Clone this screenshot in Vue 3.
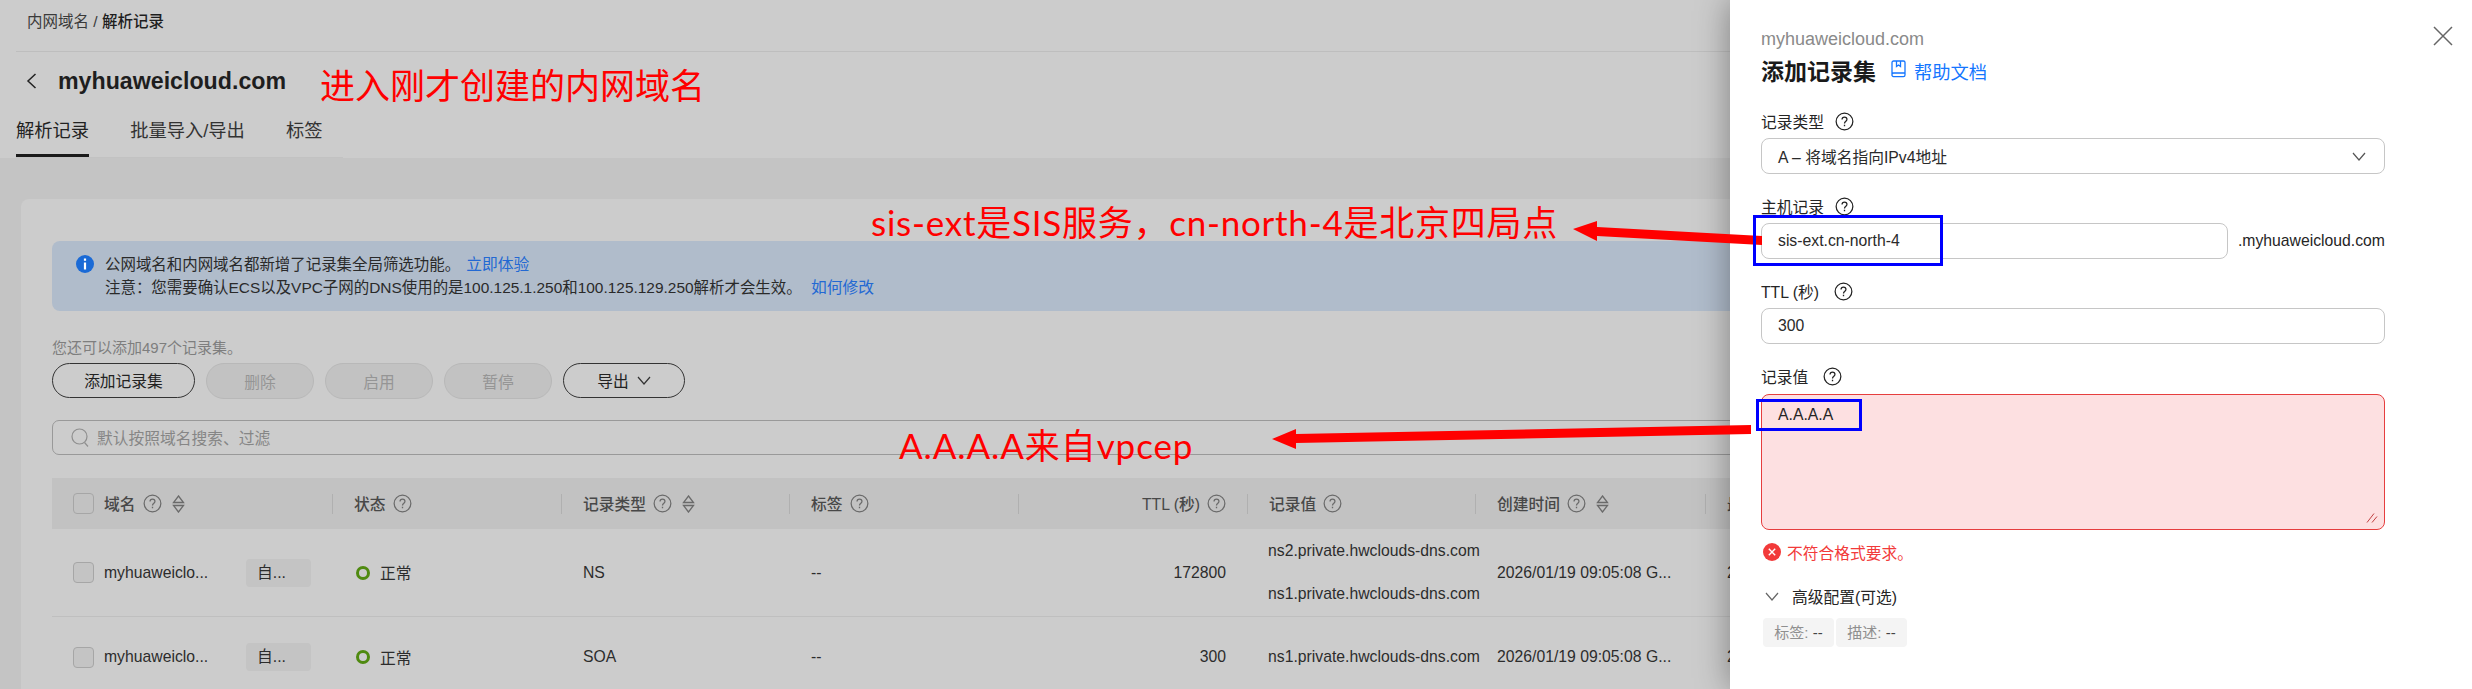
<script setup>
const columns = [
  { label: '域名', help: true, sort: true, check: true },
  { label: '状态', help: true },
  { label: '记录类型', help: true, sort: true },
  { label: '标签', help: true },
  { label: 'TTL (秒)', help: true, right: true },
  { label: '记录值', help: true },
  { label: '创建时间', help: true, sort: true },
  { label: '最近修改时间', help: true }
]
const rows = [
  { type: 'NS', ttl: '172800', values: ['ns2.private.hwclouds-dns.com', 'ns1.private.hwclouds-dns.com'], tall: true },
  { type: 'SOA', ttl: '300', values: ['ns1.private.hwclouds-dns.com'], tall: false }
]
const time = '2026/01/19 09:05:08 G...'
</script>

<template>
  <div class="page">
    <svg class="defs" width="0" height="0" aria-hidden="true">
      <symbol id="help" viewBox="0 0 20 20">
        <circle cx="10" cy="10" r="8.8" fill="none" stroke="currentColor" stroke-width="1.3" />
        <path d="M7.4 7.8c0-1.5 1.1-2.5 2.6-2.5s2.6 1 2.6 2.4c0 1.1-.6 1.7-1.4 2.3-.8.6-1.2 1-1.2 2" fill="none" stroke="currentColor" stroke-width="1.3" />
        <path d="M10 13.4v1.6" fill="none" stroke="currentColor" stroke-width="1.4" />
      </symbol>
      <symbol id="sort" viewBox="0 0 13 18">
        <path d="M6.5 1 11.5 7.5H1.5Z M6.5 17 1.5 10.5H11.5Z" fill="none" stroke="currentColor" stroke-width="1.3" />
      </symbol>
      <symbol id="chev" viewBox="0 0 14 9">
        <path d="M1 1 7 8 13 1" fill="none" stroke="currentColor" stroke-width="1.2" />
      </symbol>
    </svg>

    <header class="head">
      <div class="crumb"><span>内网域名 / </span><span class="crumb-now">解析记录</span></div>
      <div class="title-row">
        <svg class="back" width="11" height="16" viewBox="0 0 11 16"><path d="M9.5 1 2 8l7.5 7" fill="none" stroke="#222" stroke-width="1.5" /></svg>
        <h1 class="title">myhuaweicloud.com</h1>
      </div>
      <div class="tabs">
        <span class="tab tab-on">解析记录</span>
        <span class="tab">批量导入/导出</span>
        <span class="tab">标签</span>
      </div>
    </header>

    <main class="content">
      <section class="card">
        <div class="alert">
          <svg class="info" width="18" height="18" viewBox="0 0 18 18">
            <circle cx="9" cy="9" r="9" fill="#1a6ad6" />
            <path d="M9 3.6v2.2M9 7.4v7" stroke="#fff" stroke-width="2.2" fill="none" />
          </svg>
          <div class="alert-text">
            <div>公网域名和内网域名都新增了记录集全局筛选功能。 <span class="link">立即体验</span></div>
            <div>注意：您需要确认ECS以及VPC子网的DNS使用的是100.125.1.250和100.125.129.250解析才会生效。 <span class="link link-gap">如何修改</span></div>
          </div>
        </div>

        <div class="quota">您还可以添加497个记录集。</div>
        <div class="btns">
          <button class="btn w-add">添加记录集</button>
          <button class="btn off w-off">删除</button>
          <button class="btn off w-off">启用</button>
          <button class="btn off w-off">暂停</button>
          <button class="btn w-exp">导出<svg class="exp-chev" width="14" height="9"><use href="#chev" /></svg></button>
        </div>

        <div class="search">
          <svg width="19" height="20" viewBox="0 0 19 20"><circle cx="8.5" cy="8.5" r="7.5" fill="none" stroke="#8f8f8f" stroke-width="1.2" /><path d="M13.5 14.5 17 18.5" stroke="#8f8f8f" stroke-width="1.2" /></svg>
          <span>默认按照域名搜索、过滤</span>
        </div>

        <div class="table">
          <div class="grid thead">
            <div v-for="c in columns" :key="c.label" class="th" :class="{ right: c.right, first: c.check }">
              <span v-if="c.check" class="check"></span>
              <span class="th-label">{{ c.label }}</span>
              <svg v-if="c.help" class="help" width="19" height="19"><use href="#help" /></svg>
              <svg v-if="c.sort" class="sort" width="13" height="18"><use href="#sort" /></svg>
            </div>
          </div>
          <div v-for="r in rows" :key="r.type" class="grid row" :class="{ tall: r.tall }">
            <div class="td first">
              <span class="check fill"></span>
              <span>myhuaweiclo...</span>
              <span class="chip">自...</span>
            </div>
            <div class="td"><span class="ring"></span><span>正常</span></div>
            <div class="td">{{ r.type }}</div>
            <div class="td">--</div>
            <div class="td right">{{ r.ttl }}</div>
            <div class="td values"><div v-for="v in r.values" :key="v">{{ v }}</div></div>
            <div class="td">{{ time }}</div>
            <div class="td">{{ time }}</div>
          </div>
        </div>
      </section>
    </main>

    <aside class="drawer">
      <div class="d-sub">myhuaweicloud.com</div>
      <div class="d-title">
        <h2>添加记录集</h2>
        <svg class="book" width="15" height="18" viewBox="0 0 15 18"><path d="M1 14.5V2.6A1.6 1.6 0 0 1 2.6 1h9.8A1.6 1.6 0 0 1 14 2.6V13H2.6A1.6 1.6 0 0 0 1 14.5 1.6 1.6 0 0 0 2.6 16.6h9.8A1.6 1.6 0 0 0 14 15v-2M5.5 1v5.5L7.5 5l2 1.5V1" fill="none" stroke="#1476ff" stroke-width="1.3" /></svg>
        <span class="d-link">帮助文档</span>
      </div>

      <div class="f-label l1"><span>记录类型</span><svg class="help dark" width="19" height="19"><use href="#help" /></svg></div>
      <div class="ctl select"><span>A – 将域名指向IPv4地址</span><svg width="14" height="9" class="sel-chev"><use href="#chev" /></svg></div>

      <div class="f-label"><span>主机记录</span><svg class="help dark" width="19" height="19"><use href="#help" /></svg></div>
      <div class="host">
        <div class="ctl host-in">sis-ext.cn-north-4</div>
        <span>.myhuaweicloud.com</span>
      </div>

      <div class="f-label wide"><span>TTL (秒)</span><svg class="help dark" width="19" height="19"><use href="#help" /></svg></div>
      <div class="ctl">300</div>

      <div class="f-label wide"><span>记录值</span><svg class="help dark" width="19" height="19"><use href="#help" /></svg></div>
      <div class="area">
        <span>A.A.A.A</span>
        <svg class="grip" width="12" height="10" viewBox="0 0 12 10"><path d="M1 9.5 8 .5M6 9.5 11 3.5" stroke="#c04040" stroke-width="1" fill="none" /></svg>
      </div>

      <div class="err">
        <svg width="18" height="18" viewBox="0 0 18 18"><circle cx="9" cy="9" r="9" fill="#f23a3a" /><path d="M5.8 5.8l6.4 6.4M12.2 5.8l-6.4 6.4" stroke="#fff" stroke-width="1.4" /></svg>
        <span>不符合格式要求。</span>
      </div>

      <div class="adv">
        <svg width="14" height="9" class="adv-chev"><use href="#chev" /></svg>
        <span>高级配置(可选)</span>
      </div>
      <div class="pills">
        <span class="pill"><i>标签:</i> --</span>
        <span class="pill"><i>描述:</i> --</span>
      </div>

      <svg class="close" width="20" height="20" viewBox="0 0 20 20"><path d="M1 1 19 19M19 1 1 19" stroke="#666" stroke-width="1.5" /></svg>
    </aside>

    <svg class="arrows" width="2472" height="689" viewBox="0 0 2472 689">
      <polygon points="1573,229 1597,221 1597,227 1762,236 1762,245 1597,236 1597,241" fill="#ff0000" />
      <polygon points="1272,439 1296,429 1296,434 1751,425 1751,434 1296,443 1296,449" fill="#ff0000" />
    </svg>
    <div class="note n1">进入刚才创建的内网域名</div>
    <div class="note n2">sis-ext是SIS服务，cn-north-4是北京四局点</div>
    <div class="note n3">A.A.A.A来自vpcep</div>
    <div class="mark m1"></div>
    <div class="mark m2"></div>
  </div>
</template>

<style>
html, body { margin: 0; background: #c4c4c4; }
</style>

<style scoped>
.page {
  position: relative;
  width: 2472px;
  height: 689px;
  overflow: hidden;
  background: #c4c4c4;
  color: #2a2a2a;
  font-family: "Liberation Sans", "Noto Sans CJK SC", sans-serif;
  font-size: 15.75px;
}
.defs { position: absolute; }
.head { height: 158px; background: #cccccc; }
.crumb {
  height: 51px;
  margin-left: 16px;
  padding-left: 11px;
  line-height: 44px;
  border-bottom: 1px solid #bebebe;
  font-size: 15.5px;
  color: #3a3a3a;
}
.crumb-now { color: #1e1e1e; font-weight: 500; }
.title-row { height: 58px; display: flex; align-items: center; padding-left: 26px; gap: 21px; }
.title { margin: 0; font-size: 23.2px; font-weight: 700; color: #1e1e1e; }
.tabs {
  width: 327px;
  height: 47px;
  margin-left: 16px;
  display: flex;
  gap: 41px;
  border-bottom: 1px solid #c2c2c2;
  box-sizing: content-box;
}
.tab { font-size: 18.3px; line-height: 42px; height: 45px; color: #333; }
.tab-on { border-bottom: 3px solid #1a1a1a; height: 44px; color: #222; }

.content { padding: 41px 0 0 21px; }
.card {
  box-sizing: border-box;
  width: 2451px;
  height: 520px;
  padding: 42px 31px 0;
  background: #cccccc;
  border-radius: 8px;
}
.alert {
  height: 70px;
  display: flex;
  gap: 11px;
  padding: 14px 24px 0;
  box-sizing: border-box;
  background: #b0bccb;
  border-radius: 8px;
}
.info { margin-top: 0; flex: none; }
.alert-text { font-size: 15.45px; line-height: 23px; margin-top: -2px; color: #2a2a2a; }
.link { color: #2369d3; font-size: 15.75px; margin-left: 2px; }
.link-gap { margin-left: 5px; }
.quota { margin-top: 27px; line-height: 20px; color: #7e7e7e; font-size: 15px; }
.btns { margin-top: 5px; display: flex; gap: 11px; }
.btn {
  box-sizing: border-box;
  height: 35px;
  padding: 0;
  display: flex;
  align-items: center;
  justify-content: center;
  background: transparent;
  border: 1px solid #333;
  border-radius: 18px;
  font: inherit;
  color: #222;
}
.w-add { width: 143px; }
.w-off { width: 108px; height: 36px; }
.w-exp { width: 122px; }
.off { background: #c2c2c2; border-color: #b8b8b8; color: #959595; }
.exp-chev { margin-left: 8px; color: #333; }
.search {
  box-sizing: border-box;
  margin-top: 21px;
  height: 35px;
  display: flex;
  align-items: center;
  gap: 7px;
  padding-left: 18px;
  border: 1px solid #999;
  border-radius: 7px;
  color: #868686;
}
.table { margin-top: 23px; }
.grid { display: grid; grid-template-columns: 280px 229px 228px 229px 229px 228px 230px 400px; }
.thead { height: 51px; background: #c2c2c2; align-items: center; }
.th {
  position: relative;
  display: flex;
  align-items: center;
  height: 20px;
  padding-left: 21px;
  color: #484848;
  font-weight: 500;
  border-left: 1px solid #b0b0b0;
  box-sizing: border-box;
}
.th.first { border-left: 0; padding-left: 21px; }
.th.right { justify-content: flex-end; padding-right: 21px; }
.th-label { margin-right: 7px; }
.help { color: #6a6a6a; flex: none; }
.help.dark { color: #222; }
.sort { margin-left: 10px; color: #6a6a6a; flex: none; }
.check {
  box-sizing: border-box;
  width: 21px;
  height: 21px;
  margin-right: 10px;
  border: 1px solid #a6a6a6;
  border-radius: 4px;
  flex: none;
}
.check.fill { background: #c4c4c4; }
.row { height: 80px; border-bottom: 1px solid #bfbfbf; box-sizing: content-box; }
.row.tall { height: 87px; }
.td { display: flex; align-items: center; padding-left: 22px; min-width: 0; white-space: nowrap; color: #2c2c2c; }
.td.first { padding: 0 21px; }
.td.right { justify-content: flex-end; padding-right: 21px; }
.td.values { flex-direction: column; align-items: flex-start; justify-content: center; gap: 25px; padding-left: 21px; }
.chip {
  margin-left: auto;
  width: 65px;
  height: 28px;
  line-height: 28px;
  padding-left: 11px;
  box-sizing: border-box;
  background: #c4c4c4;
  border-radius: 4px;
}
.ring {
  box-sizing: border-box;
  width: 14px;
  height: 14px;
  margin: 0 10px 0 2px;
  border: 3px solid #4f8a10;
  border-radius: 50%;
}

.drawer {
  position: absolute;
  top: 0;
  right: 0;
  bottom: 0;
  width: 742px;
  box-sizing: border-box;
  padding: 29px 87px 0 31px;
  background: #fff;
  box-shadow: 0 0 32px rgba(0, 0, 0, 0.38);
  color: #252525;
}
.d-sub { line-height: 20px; color: #8a8a8a; font-size: 18px; }
.d-title { margin-top: 6px; height: 30px; display: flex; align-items: center; }
.d-title h2 { margin: 0; font-size: 23px; font-weight: 700; color: #1a1a1a; }
.book { margin-left: 15px; position: relative; top: -1px; }
.d-link { margin-left: 8px; font-size: 18.3px; color: #1476ff; position: relative; top: 1px; }
.f-label { margin-top: 22px; height: 20px; display: flex; align-items: center; gap: 11px; }
.f-label.wide { gap: 15px; }
.l1 { margin-top: 26px; }
.ctl {
  box-sizing: border-box;
  height: 36px;
  margin-top: 7px;
  padding-left: 16px;
  display: flex;
  align-items: center;
  border: 1px solid #c6c6c6;
  border-radius: 8px;
  color: #2a2a2a;
}
.select { justify-content: space-between; padding-right: 18px; }
.sel-chev { color: #555; }
.host { display: flex; align-items: flex-end; justify-content: space-between; }
.host-in { width: 467px; }
.host span { line-height: 36px; }
.area {
  position: relative;
  box-sizing: border-box;
  height: 136px;
  margin-top: 8px;
  padding: 9px 16px;
  line-height: 22px;
  background: #fde0e1;
  border: 1px solid #e63e3e;
  border-radius: 8px;
}
.grip { position: absolute; right: 6px; bottom: 6px; }
.err { margin-top: 13px; padding-left: 2px; height: 18px; display: flex; align-items: center; gap: 6px; color: #f23a3a; }
.err svg { flex: none; }
.adv { margin-top: 25px; padding-left: 4px; height: 20px; display: flex; align-items: center; gap: 13px; }
.adv-chev { color: #666; }
.pills { margin-top: 12px; margin-left: 2px; display: flex; gap: 2px; }
.pill {
  box-sizing: border-box;
  width: 71px;
  height: 29px;
  line-height: 29px;
  text-align: center;
  background: #f4f4f4;
  border-radius: 4px;
  color: #444;
  font-size: 15px;
}
.pill i { font-style: normal; color: #8f8f8f; }
.close { position: absolute; top: 26px; left: 703px; }

.arrows { position: absolute; left: 0; top: 0; pointer-events: none; }
.note {
  position: absolute;
  color: #ff0000;
  font-family: Lato, "Noto Sans CJK SC", sans-serif;
  line-height: 44px;
  white-space: nowrap;
  font-size: 35px;
}
.n1 { left: 320px; top: 63px; }
.n2 { left: 871px; top: 200px; letter-spacing: 0.75px; }
.n3 { left: 899px; top: 423px; letter-spacing: 0.9px; }
.mark { position: absolute; box-sizing: border-box; border: 3px solid #0000ff; }
.m1 { left: 1753px; top: 215px; width: 190px; height: 51px; }
.m2 { left: 1756px; top: 399px; width: 106px; height: 32px; }
</style>
